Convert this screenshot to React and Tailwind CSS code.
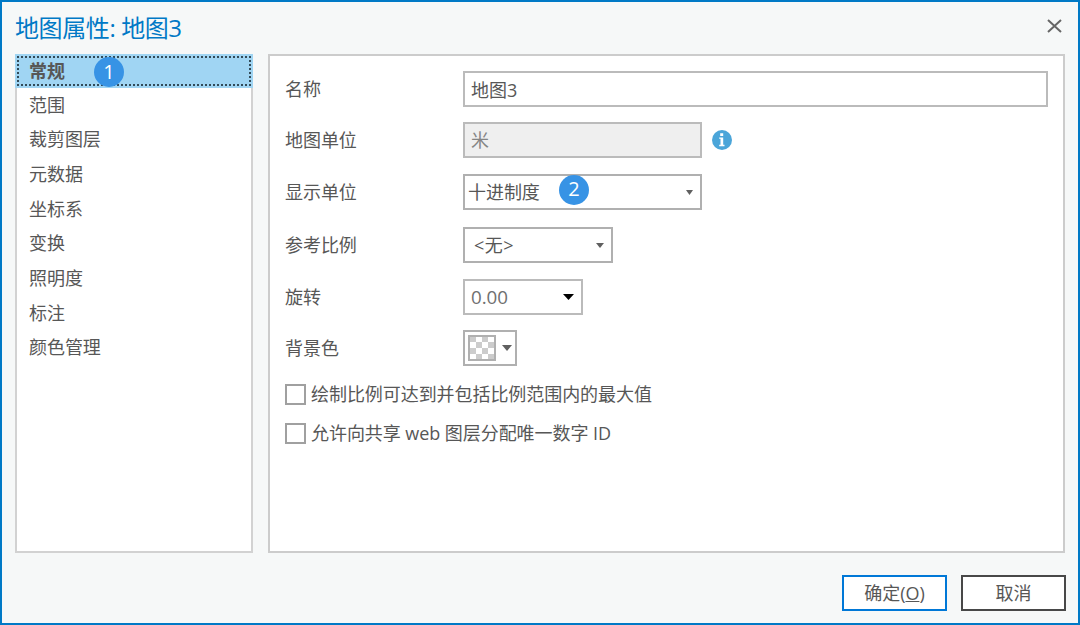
import React, { useState } from 'react';

const secciones = ['常规', '范围', '裁剪图层', '元数据', '坐标系', '变换', '照明度', '标注', '颜色管理'];

const Flecha = ({ className }) => (
  <svg className={className} viewBox="0 0 10 6" preserveAspectRatio="none" fill="currentColor">
    <path d="M0 0h10L5 6z" />
  </svg>
);

const Paso = ({ numero, className }) => (
  <span className={`absolute flex h-[30px] w-[30px] items-center justify-center rounded-full bg-[#3793e5] pb-px text-[20px] font-normal leading-none text-white ${className}`}>
    {numero}
  </span>
);

const Fila = ({ etiqueta, className, children }) => (
  <div className={`flex h-9 items-center ${className}`}>
    <span className="w-[178px] flex-shrink-0">{etiqueta}</span>
    {children}
  </div>
);

const Casilla = ({ texto, className }) => {
  const [marcada, setMarcada] = useState(false);

  return (
    <label className={`flex h-[21px] items-center gap-[5px] whitespace-nowrap ${className}`}>
      <input
        type="checkbox"
        checked={marcada}
        onChange={() => setMarcada(!marcada)}
        className="h-[21px] w-[21px] flex-shrink-0 appearance-none border-2 border-[#a0a0a0] bg-white checked:bg-[#3793e5]"
      />
      <span className="pb-px">{texto}</span>
    </label>
  );
};

const App = () => {
  const [activa, setActiva] = useState('常规');
  const [nombre, setNombre] = useState('地图3');

  return (
    <div className="flex h-[625px] w-[1080px] flex-col overflow-hidden border-2 border-[#0079c6] bg-[#f6f8f8] font-['Open_Sans','Noto_Sans_CJK_SC',sans-serif] text-[18px] leading-6 tracking-[-0.06px] text-[#575757]">
      {/* Título */}
      <header className="flex h-[52px] flex-shrink-0 items-center justify-between pl-[13px] pr-4">
        <h1 className="text-[24px] tracking-[-0.4px] text-[#0079c6]">地图属性: 地图3</h1>
        <button className="mb-1" aria-label="关闭">
          <svg className="h-[15px] w-[15px] text-[#666666]" viewBox="0 0 15 15" fill="none" stroke="currentColor" strokeWidth={2}>
            <path d="M1 1l13 12M14 1l-13 12" />
          </svg>
        </button>
      </header>

      <div className="flex h-[499px] flex-shrink-0 gap-[15px] pl-[13px] pr-[13px]">
        {/* Lista de secciones */}
        <nav className="relative w-[238px] flex-shrink-0 border-2 border-t-0 border-[#d2d2d2] bg-white">
          {secciones.map((seccion) => (
            <button
              key={seccion}
              onClick={() => setActiva(seccion)}
              className={
                seccion === activa
                  ? '-mx-0.5 flex h-[33.5px] w-[238px] bg-[#a0d5f3] p-[2px] font-bold'
                  : 'flex h-[34.65px] w-full items-center pl-3'
              }
            >
              {seccion === activa ? (
                <span className="flex h-full w-full items-center border-2 border-dotted border-[#334b58] pl-2.5">{seccion}</span>
              ) : (
                seccion
              )}
            </button>
          ))}
          <Paso numero="1" className="left-[77px] top-[3px]" />
        </nav>

        {/* Opciones generales */}
        <main className="flex-1 border-2 border-[#cccccc] bg-white pl-[15px] pr-[15px] pt-[15px]">
          <Fila etiqueta="名称">
            <input
              value={nombre}
              onChange={(e) => setNombre(e.target.value)}
              className="h-9 flex-1 border-2 border-[#bbbbbb] bg-white pl-1.5 outline-none"
            />
          </Fila>

          <Fila etiqueta="地图单位" className="mt-[15px]">
            <div className="flex h-9 w-[239px] items-center border-2 border-[#bbbbbb] bg-[#efefef] pl-1.5 text-[#858585]">米</div>
            <svg className="ml-[10px] h-5 w-5" viewBox="0 0 20 20">
              <circle cx="10" cy="10" r="10" fill="#4ba5d9" />
              <path d="M8.2 3.3h3v2.6h-3zM7.2 7.4h4v7.4h1.3v1.4H7.2v-1.4h1.3V8.8H7.2z" fill="#fff" />
            </svg>
          </Fila>

          <Fila etiqueta="显示单位" className="mt-4">
            <button className="relative flex h-9 w-[239px] items-center justify-between border-2 border-[#b0b0b0] bg-white pl-[3px] pr-[7px]">
              十进制度
              <Flecha className="h-[5px] w-[7px] text-[#606060]" />
              <Paso numero="2" className="left-[94px] -top-[1.5px]" />
            </button>
          </Fila>

          <Fila etiqueta="参考比例" className="mt-[17px]">
            <button className="flex h-9 w-[150px] items-center justify-between border-2 border-[#b0b0b0] bg-white pl-[9px] pr-[7px]">
              <span className="tracking-[0.5px]">&lt;无&gt;</span>
              <Flecha className="h-[5px] w-[8px] text-[#606060]" />
            </button>
          </Fila>

          <Fila etiqueta="旋转" className="mt-4">
            <button className="flex h-9 w-[120px] items-center justify-between border-2 border-[#bbbbbb] bg-white pl-1.5 pr-[7px] text-[#707070]">
              <span className="text-[18.8px]">0.00</span>
              <Flecha className="h-[6px] w-[11px] text-black" />
            </button>
          </Fila>

          <Fila etiqueta="背景色" className="mt-[15px]">
            <button className="flex h-9 w-[54px] items-center justify-between border-2 border-[#b0b0b0] bg-white pl-[3px] pr-[3px]">
              <svg className="h-[26px] w-[28px]" viewBox="0 0 28 26">
                <rect x="1" y="1" width="26" height="24" fill="#fff" />
                <path
                  d="M2 2h6v5h-6zM14 2h6v5h-6zM8 7h6v6h-6zM20 7h6v6h-6zM2 13h6v6h-6zM14 13h6v6h-6zM8 19h6v5h-6zM20 19h6v5h-6z"
                  fill="#cccccc"
                />
                <rect x="1" y="1" width="26" height="24" fill="none" stroke="#b0b0b0" strokeWidth="2" />
              </svg>
              <Flecha className="h-[6px] w-[10px] text-[#606060]" />
            </button>
          </Fila>

          <Casilla texto="绘制比例可达到并包括比例范围内的最大值" className="mt-[18px]" />
          <Casilla texto="允许向共享 web 图层分配唯一数字 ID" className="mt-[18px]" />
        </main>
      </div>

      {/* Botones de acción */}
      <footer className="flex justify-end gap-[14px] pr-3 pt-[22px]">
        <button className="h-9 w-[105px] border-2 border-[#0078d7] bg-white">
          确定(<span className="underline">O</span>)
        </button>
        <button className="h-9 w-[105px] border-2 border-[#484848] bg-white">取消</button>
      </footer>
    </div>
  );
};

export default App;
